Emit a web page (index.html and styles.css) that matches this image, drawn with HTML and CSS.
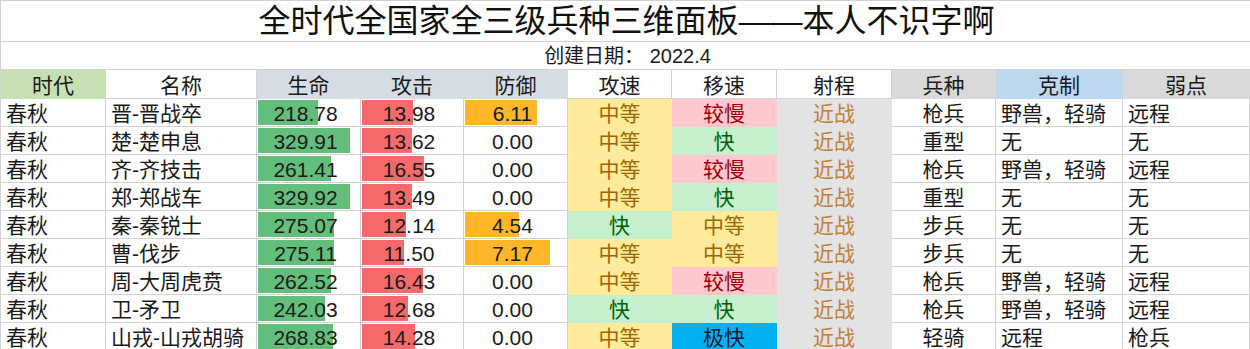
FILE: index.html
```html
<!DOCTYPE html>
<html lang="zh-CN">
<head>
<meta charset="utf-8">
<title>全时代全国家全三级兵种三维面板</title>
<link rel="stylesheet" href="styles.css">
</head>
<body>
<div class="sheet">
  <div class="title">全时代全国家全三级兵种三维面板——本人不识字啊</div>
  <div class="subtitle">创建日期：&nbsp;2022.4</div>

  <div class="c h h-green">时代</div>
  <div class="c h">名称</div>
  <div class="c h h-slate">生命</div>
  <div class="c h h-slate">攻击</div>
  <div class="c h h-slate">防御</div>
  <div class="c h">攻速</div>
  <div class="c h">移速</div>
  <div class="c h">射程</div>
  <div class="c h h-grey">兵种</div>
  <div class="c h h-blue">克制</div>
  <div class="c h h-grey">弱点</div>

  <div class="c l">春秋</div><div class="c l">晋-晋战卒</div>
  <div class="c n hp" style="--w:60px">218.78</div><div class="c n atk" style="--w:51px">13.98</div><div class="c n def" style="--w:72px">6.11</div>
  <div class="c t mid">中等</div><div class="c t slow">较慢</div><div class="c t melee">近战</div>
  <div class="c t">枪兵</div><div class="c l">野兽，轻骑</div><div class="c l">远程</div>

  <div class="c l">春秋</div><div class="c l">楚-楚申息</div>
  <div class="c n hp" style="--w:92px">329.91</div><div class="c n atk" style="--w:50px">13.62</div><div class="c n">0.00</div>
  <div class="c t mid">中等</div><div class="c t fast">快</div><div class="c t melee">近战</div>
  <div class="c t">重型</div><div class="c l">无</div><div class="c l">无</div>

  <div class="c l">春秋</div><div class="c l">齐-齐技击</div>
  <div class="c n hp" style="--w:73px">261.41</div><div class="c n atk" style="--w:62px">16.55</div><div class="c n">0.00</div>
  <div class="c t mid">中等</div><div class="c t slow">较慢</div><div class="c t melee">近战</div>
  <div class="c t">枪兵</div><div class="c l">野兽，轻骑</div><div class="c l">远程</div>

  <div class="c l">春秋</div><div class="c l">郑-郑战车</div>
  <div class="c n hp" style="--w:92px">329.92</div><div class="c n atk" style="--w:50px">13.49</div><div class="c n">0.00</div>
  <div class="c t mid">中等</div><div class="c t fast">快</div><div class="c t melee">近战</div>
  <div class="c t">重型</div><div class="c l">无</div><div class="c l">无</div>

  <div class="c l">春秋</div><div class="c l">秦-秦锐士</div>
  <div class="c n hp" style="--w:76px">275.07</div><div class="c n atk" style="--w:44px">12.14</div><div class="c n def" style="--w:54px">4.54</div>
  <div class="c t fast">快</div><div class="c t mid">中等</div><div class="c t melee">近战</div>
  <div class="c t">步兵</div><div class="c l">无</div><div class="c l">无</div>

  <div class="c l">春秋</div><div class="c l">曹-伐步</div>
  <div class="c n hp" style="--w:76px">275.11</div><div class="c n atk" style="--w:42px">11.50</div><div class="c n def" style="--w:85px">7.17</div>
  <div class="c t mid">中等</div><div class="c t mid">中等</div><div class="c t melee">近战</div>
  <div class="c t">步兵</div><div class="c l">无</div><div class="c l">无</div>

  <div class="c l">春秋</div><div class="c l">周-大周虎贲</div>
  <div class="c n hp" style="--w:73px">262.52</div><div class="c n atk" style="--w:61px">16.43</div><div class="c n">0.00</div>
  <div class="c t mid">中等</div><div class="c t slow">较慢</div><div class="c t melee">近战</div>
  <div class="c t">枪兵</div><div class="c l">野兽，轻骑</div><div class="c l">远程</div>

  <div class="c l">春秋</div><div class="c l">卫-矛卫</div>
  <div class="c n hp" style="--w:67px">242.03</div><div class="c n atk" style="--w:46px">12.68</div><div class="c n">0.00</div>
  <div class="c t fast">快</div><div class="c t fast">快</div><div class="c t melee">近战</div>
  <div class="c t">枪兵</div><div class="c l">野兽，轻骑</div><div class="c l">远程</div>

  <div class="c l">春秋</div><div class="c l">山戎-山戎胡骑</div>
  <div class="c n hp" style="--w:75px">268.83</div><div class="c n atk" style="--w:53px">14.28</div><div class="c n">0.00</div>
  <div class="c t mid">中等</div><div class="c t vfast">极快</div><div class="c t melee">近战</div>
  <div class="c t">轻骑</div><div class="c l">远程</div><div class="c l">枪兵</div>
</div>
</body>
</html>
```

FILE: styles.css
```css
html, body {
  margin: 0;
  padding: 0;
  background: #ffffff;
}

body {
  width: 1250px;
  height: 349px;
  overflow: hidden;
  font-family: "Liberation Sans", "Noto Sans CJK SC", sans-serif;
  color: #1a1a1a;
}

.sheet {
  display: grid;
  grid-template-columns: 105px 151px 104px 103px 104px 104px 105px 115px 104px 127px 1fr;
  grid-template-rows: 41px 28px 29px;
  grid-auto-rows: 28px;
  border-top: 1px solid #d2d2d2;
  border-left: 1px solid #d2d2d2;
  width: 1249px;
}

.title {
  grid-column: 1 / -1;
  border-bottom: 1px solid #d2d2d2;
  display: flex;
  align-items: center;
  justify-content: center;
  font-size: 32px;
  line-height: 40px;
  color: #111;
  padding-left: 2px;
}

.subtitle {
  grid-column: 1 / -1;
  border-bottom: 1px solid #d2d2d2;
  display: flex;
  align-items: center;
  justify-content: center;
  font-size: 20px;
  line-height: 27px;
  padding-top: 1px;
  padding-left: 4px;
  color: #1a1a1a;
}

.c {
  box-sizing: border-box;
  border-right: 1px solid #d2d2d2;
  border-bottom: 1px solid #d2d2d2;
  display: flex;
  align-items: center;
  font-size: 21px;
  line-height: 27px;
  padding-top: 2px;
  white-space: nowrap;
  overflow: hidden;
}

.h {
  justify-content: center;
}

.h-green { background: #c6e0b4; border-color: transparent; }
.h-slate { background: #d6dce4; border-color: transparent; }
.h-grey  { background: #d9d9d9; border-color: transparent; }
.h-blue  { background: #bdd7ee; border-color: transparent; }

.l {
  justify-content: flex-start;
  padding-left: 5px;
}

.t {
  justify-content: center;
}

.n {
  justify-content: center;
  padding-right: 6px;
  background-repeat: no-repeat;
  background-position: 1px 1px;
  background-size: var(--w) 25px;
}

.hp  { background-image: linear-gradient(#63be7b, #63be7b); }
.atk { background-image: linear-gradient(#f8696b, #f8696b); }
.def { background-image: linear-gradient(#ffb628, #ffb628); }

.mid   { background: #ffeb9c; color: #9c6500; border-color: transparent; }
.fast  { background: #c6efce; color: #006100; border-color: transparent; }
.slow  { background: #ffc7ce; color: #9c0006; border-color: transparent; }
.vfast { background: #00b0f0; color: #1a1a2a; border-color: transparent; }
.melee { background: #e3e3e3; color: #c0803a; border-color: transparent; }
```
